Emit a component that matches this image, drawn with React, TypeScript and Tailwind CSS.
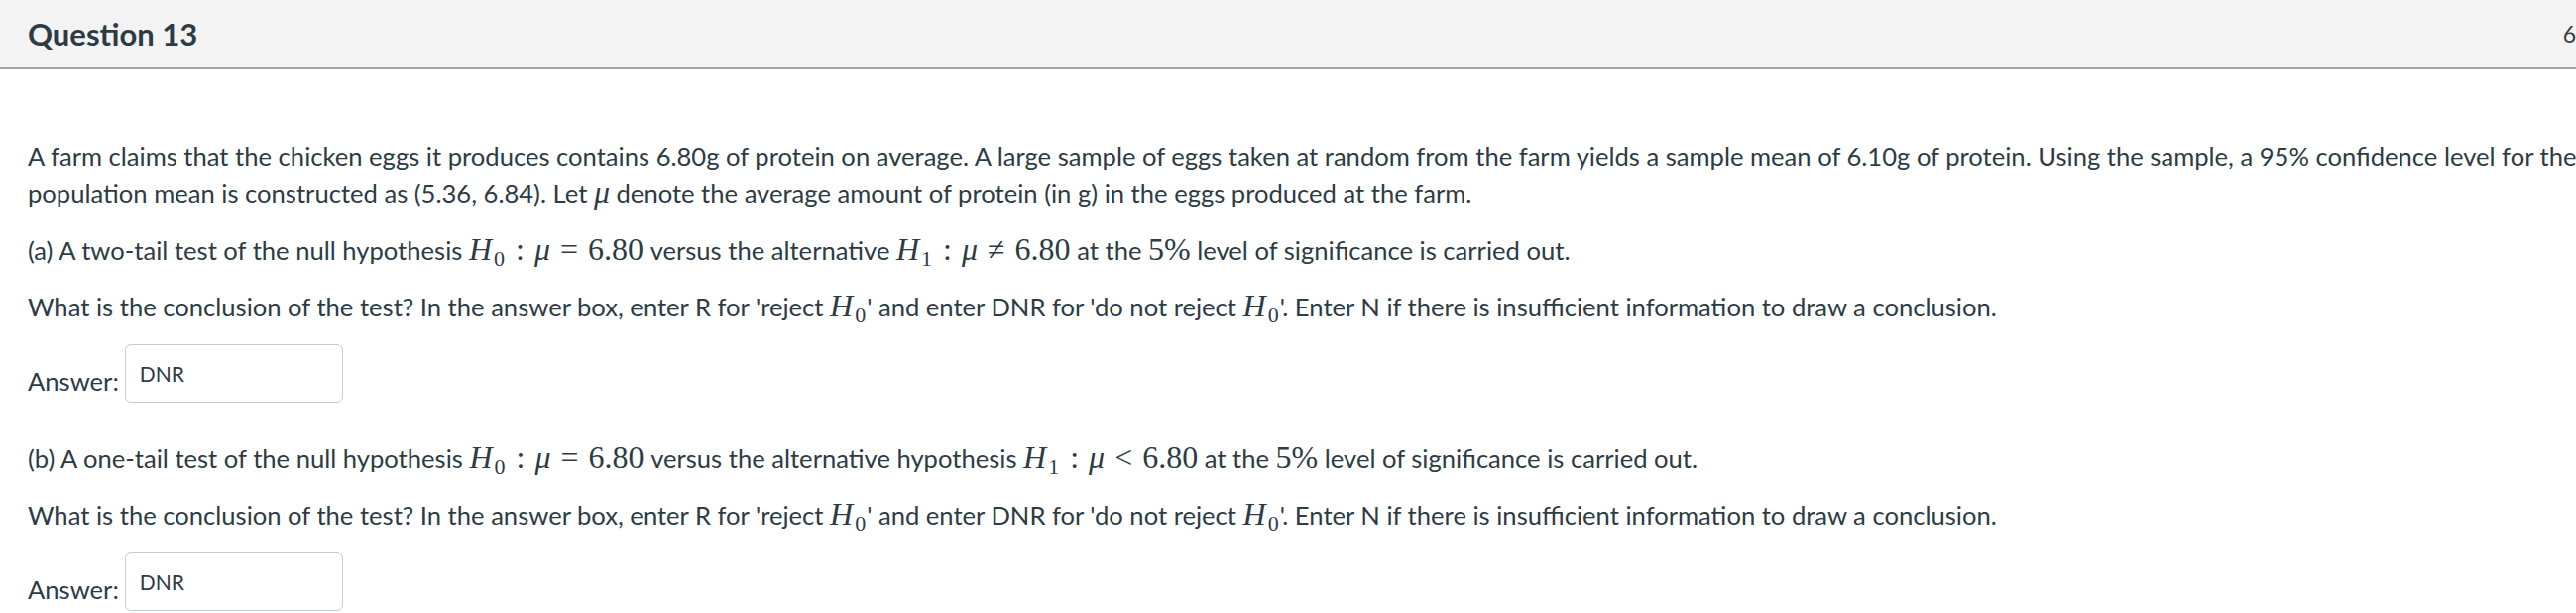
import React from "react";

const Math = ({ children }: { children: React.ReactNode }) => (
  <span className="font-['Liberation_Serif',serif] text-[32px] leading-none">{children}</span>
);

const Rel = ({ children }: { children: React.ReactNode }) => (
  <span className="mx-[10px]">{children}</span>
);

const H = ({ n }: { n: string }) => (
  <>
    <span className="italic">H</span>
    <sub className="text-[22px] ml-[2px] mr-[1px]">{n}</sub>
  </>
);

const Mu = () => <span className="italic">μ</span>;

const AnswerRow = () => (
  <div className="flex items-end gap-[6px]">
    <span className="mb-[3px]">Answer:</span>
    <div className="w-[220px] h-[59px] border border-[#c7cdd1] rounded-[6px] bg-white flex items-center pl-[14px] text-[21px] text-[#2d3b45]">
      DNR
    </div>
  </div>
);

export default function App() {
  return (
    <div className="w-full h-[618px] overflow-hidden bg-white">
      <div className="w-[2663px] font-['Lato','Noto_Sans',sans-serif] text-[#2d3b45]">
        <div className="h-[70px] bg-[#f3f3f3] border-b-2 border-[#a3a3a3] flex items-center justify-between px-[28px]">
          <span className="text-[31px] font-bold">Question 13</span>
          <span className="text-[23px] text-[#3b3b3b]">6 pts</span>
        </div>
        <div className="px-[28px] pt-[68px] text-[25.6px] leading-[38px]">
          <p className="whitespace-nowrap">
            A farm claims that the chicken eggs it produces contains 6.80g of protein on average. A large sample of eggs taken at random from the farm yields a sample mean of 6.10g of protein. Using the sample, a 95% confidence level for the
            <br />
            population mean is constructed as (5.36, 6.84). Let <Math><Mu /></Math> denote the average amount of protein (in g) in the eggs produced at the farm.
          </p>
          <p className="mt-[19px] whitespace-nowrap">
            (a) A two-tail test of the null hypothesis{" "}
            <Math>
              <H n="0" />
              <Rel>:</Rel>
              <Mu />
              <Rel>=</Rel>6.80
            </Math>{" "}
            versus the alternative{" "}
            <Math>
              <H n="1" />
              <Rel>:</Rel>
              <Mu />
              <Rel>≠</Rel>6.80
            </Math>{" "}
            at the <Math>5%</Math> level of significance is carried out.
          </p>
          <p className="mt-[19px] whitespace-nowrap">
            What is the conclusion of the test? In the answer box, enter R for 'reject <Math><H n="0" /></Math>' and enter DNR for 'do not reject <Math><H n="0" /></Math>'. Enter N if there is insufficient information to draw a conclusion.
          </p>
          <div className="mt-[19px]">
            <AnswerRow />
          </div>
          <p className="mt-[37px] whitespace-nowrap">
            (b) A one-tail test of the null hypothesis{" "}
            <Math>
              <H n="0" />
              <Rel>:</Rel>
              <Mu />
              <Rel>=</Rel>6.80
            </Math>{" "}
            versus the alternative hypothesis{" "}
            <Math>
              <H n="1" />
              <Rel>:</Rel>
              <Mu />
              <Rel>&lt;</Rel>6.80
            </Math>{" "}
            at the <Math>5%</Math> level of significance is carried out.
          </p>
          <p className="mt-[19px] whitespace-nowrap">
            What is the conclusion of the test? In the answer box, enter R for 'reject <Math><H n="0" /></Math>' and enter DNR for 'do not reject <Math><H n="0" /></Math>'. Enter N if there is insufficient information to draw a conclusion.
          </p>
          <div className="mt-[19px]">
            <AnswerRow />
          </div>
        </div>
      </div>
    </div>
  );
}
